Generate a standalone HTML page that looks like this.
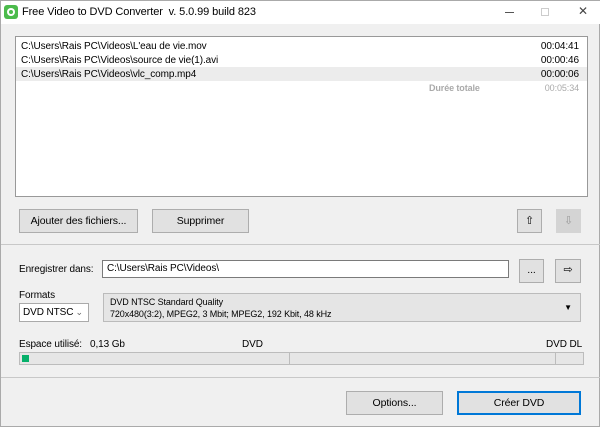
<!DOCTYPE html>
<html><head><style>
*{box-sizing:border-box;margin:0;padding:0}
body{width:600px;height:427px;background:#f0f0f0;font-family:"Liberation Sans",sans-serif;font-size:10px;color:#000;position:relative;overflow:hidden;border:1px solid #aaa;letter-spacing:-0.1px}
.a{position:absolute}
.btn{position:absolute;background:#e1e1e1;border:1px solid #adadad;text-align:center;font-size:10.5px}
</style></head><body>
<div class="a" style="left:0;top:0;width:600px;height:23px;background:#fff"></div>
<div class="a" style="left:3px;top:4px;width:14px;height:14px;background:#4cbb4c;border-radius:3px"><div class="a" style="left:3px;top:3px;width:8px;height:8px;border-radius:50%;background:#fff"></div><div class="a" style="left:5px;top:5px;width:4px;height:4px;border-radius:50%;background:#4cbb4c"></div></div>
<div class="a" style="left:21px;top:5px;font-size:11px">Free Video to DVD Converter&nbsp; v. 5.0.99 build 823</div>
<div class="a" style="left:504px;top:11px;width:9px;height:1px;background:#555"></div>
<div class="a" style="left:540px;top:7px;width:8px;height:8px;border:1px solid #ccc"></div>
<div class="a" style="left:577px;top:3px;font-size:12px;color:#444">✕</div>

<div class="a" style="left:14px;top:35px;width:573px;height:161px;background:#fff;border:1px solid #999"></div>
<div class="a" style="left:15px;top:66px;width:571px;height:14px;background:#ececec"></div>
<div class="a" style="left:20px;top:39px;line-height:14px;font-size:10px">C:\Users\Rais PC\Videos\L'eau de vie.mov<br>C:\Users\Rais PC\Videos\source de vie(1).avi<br>C:\Users\Rais PC\Videos\vlc_comp.mp4</div>
<div class="a" style="right:20px;top:39px;line-height:14px;font-size:10px;text-align:right">00:04:41<br>00:00:46<br>00:00:06</div>
<div class="a" style="left:428px;top:82px;font-size:9px;color:#aaa;font-weight:bold">Durée totale</div>
<div class="a" style="right:20px;top:82px;font-size:9px;color:#aaa">00:05:34</div>

<div class="btn" style="left:18px;top:208px;width:119px;height:24px;line-height:22px">Ajouter des fichiers...</div>
<div class="btn" style="left:151px;top:208px;width:97px;height:24px;line-height:22px">Supprimer</div>
<div class="btn" style="left:516px;top:208px;width:25px;height:24px;line-height:22px;font-size:11px">⇧</div>
<div class="btn" style="left:555px;top:208px;width:25px;height:24px;line-height:22px;font-size:11px;background:#d4d4d4;border-color:#d4d4d4;color:#999">⇩</div>
<div class="a" style="left:0;top:243px;width:600px;height:1px;background:#c8c8c8"></div>

<div class="a" style="left:18px;top:263px;font-size:10px">Enregistrer dans:</div>
<div class="a" style="left:101px;top:259px;width:407px;height:18px;background:#fff;border:1px solid #7a7a7a;padding:2px 4px;font-size:10px">C:\Users\Rais PC\Videos\</div>
<div class="btn" style="left:518px;top:258px;width:25px;height:24px;line-height:20px">...</div>
<div class="btn" style="left:554px;top:258px;width:26px;height:24px;line-height:20px;font-size:11px">⇨</div>

<div class="a" style="left:18px;top:289px;font-size:10px">Formats</div>
<div class="a" style="left:18px;top:302px;width:70px;height:19px;background:#fff;border:1px solid #aaa;padding:3px 3px;font-size:10px">DVD NTSC<span style="position:absolute;right:5px;color:#666;font-size:9px">⌄</span></div>
<div class="a" style="left:102px;top:292px;width:478px;height:29px;background:#e5e5e5;border:1px solid #bbb;padding:2px 6px;font-size:9px;line-height:12px">DVD NTSC Standard Quality<br>720x480(3:2), MPEG2, 3 Mbit; MPEG2, 192 Kbit, 48 kHz<span style="position:absolute;right:8px;top:8px;font-size:8px">▼</span></div>

<div class="a" style="left:18px;top:338px;font-size:10px">Espace utilisé:&nbsp;&nbsp; 0,13 Gb</div>
<div class="a" style="left:241px;top:338px;font-size:10px">DVD</div>
<div class="a" style="left:545px;top:338px;font-size:10px">DVD DL</div>
<div class="a" style="left:18px;top:351px;width:565px;height:13px;background:#e6e6e6;border:1px solid #bcbcbc"></div>
<div class="a" style="left:21px;top:354px;width:7px;height:7px;background:#06b06a"></div>
<div class="a" style="left:288px;top:352px;width:1px;height:11px;background:#bcbcbc"></div>
<div class="a" style="left:554px;top:352px;width:1px;height:11px;background:#bcbcbc"></div>
<div class="a" style="left:0;top:376px;width:600px;height:1px;background:#c8c8c8"></div>

<div class="btn" style="left:345px;top:390px;width:97px;height:24px;line-height:22px">Options...</div>
<div class="btn" style="left:456px;top:390px;width:124px;height:24px;line-height:20px;border:2px solid #0078d7">Créer DVD</div>
</body></html>
